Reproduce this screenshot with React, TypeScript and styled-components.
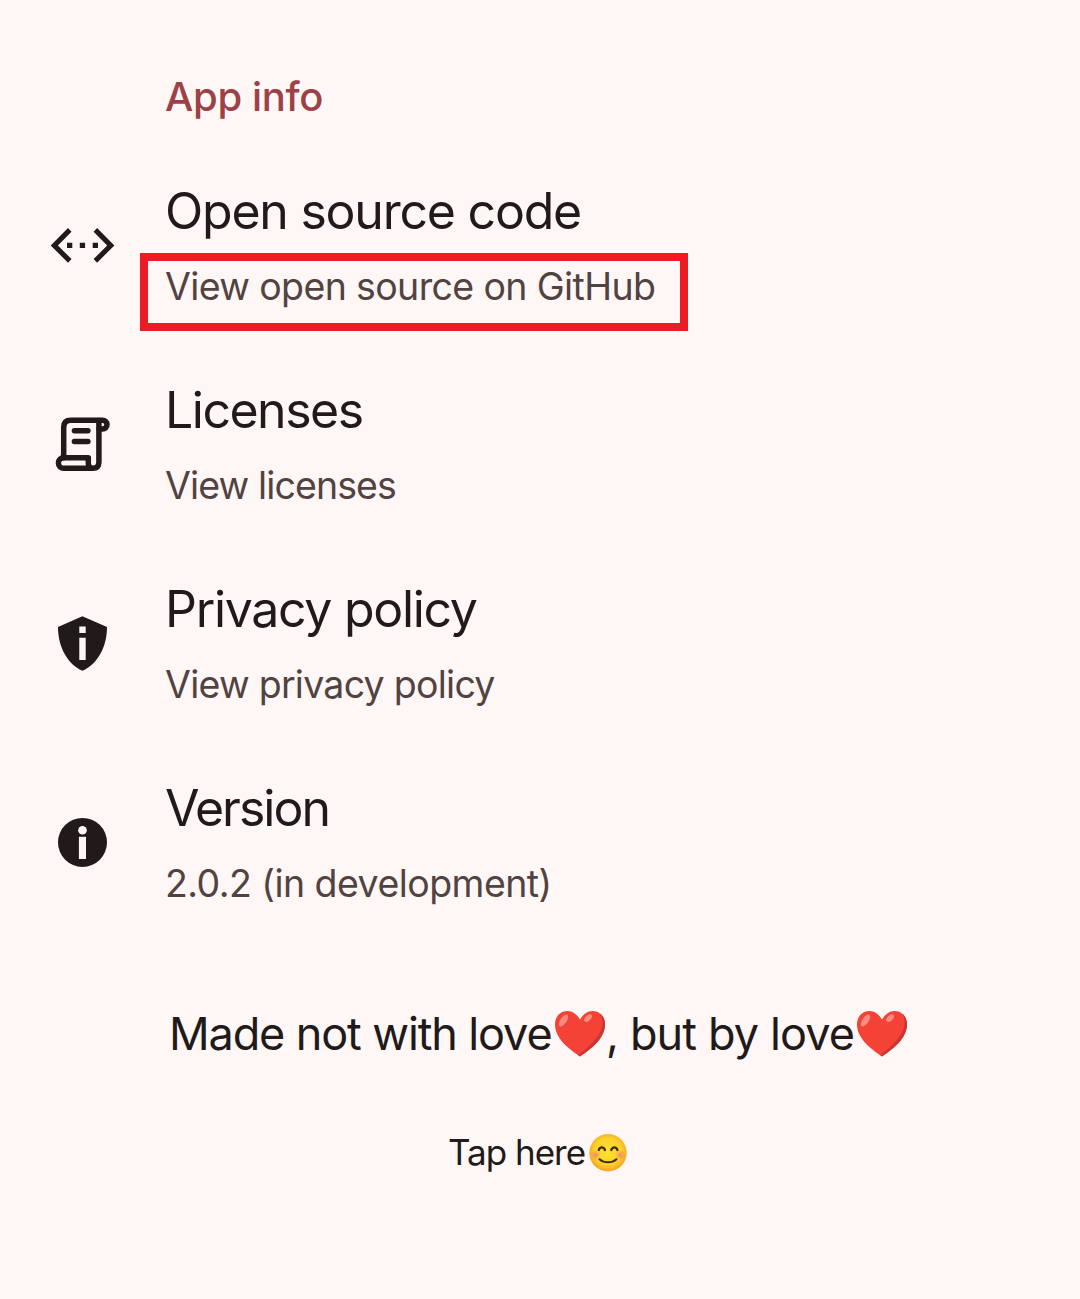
import React from "react";
import styled, { createGlobalStyle } from "styled-components";

const ink = "#201a1a";
const surface = "#fff7f5";

const GlobalStyle = createGlobalStyle`
  * { box-sizing: border-box; }
  body {
    margin: 0;
    background: ${surface};
    color: ${ink};
    font-family: Inter, Roboto, "Liberation Sans", sans-serif;
  }
`;

const Page = styled.main`
  width: 1080px;
  height: 1299px;
  padding-top: 72px;
  background: ${surface};
  overflow: hidden;
`;

const SectionTitle = styled.h2`
  margin: 0 0 0 165px;
  height: 50px;
  line-height: 50px;
  font-size: 40px;
  font-weight: 500;
  letter-spacing: -0.35px;
  color: #9c4146;
  white-space: nowrap;
`;

const List = styled.ul`
  list-style: none;
  margin: 24px 0 0;
  padding: 0;
`;

const Row = styled.li`
  display: flex;
  align-items: center;
  height: 199px;
  padding-left: 48px;
  gap: 48px;
`;

const RowIcon = styled.svg`
  flex: none;
  width: 69px;
  height: 69px;
  fill: ${ink};
`;

const RowText = styled.div`
  display: flex;
  flex-direction: column;
  align-items: flex-start;
  gap: 14px;
  padding-top: 5px;
`;

const Title = styled.div<{ $track: number }>`
  height: 64px;
  line-height: 64px;
  font-size: 50px;
  font-weight: 400;
  letter-spacing: ${(p) => p.$track}px;
  white-space: nowrap;
`;

const Subtitle = styled.div<{ $track: number }>`
  position: relative;
  height: 60px;
  line-height: 60px;
  font-size: 37.5px;
  font-weight: 400;
  letter-spacing: ${(p) => p.$track}px;
  color: #524343;
  white-space: nowrap;
`;

const Highlight = styled.span`
  position: absolute;
  left: -25px;
  top: -4px;
  width: 548px;
  height: 78px;
  border: 8px solid #ed1c24;
`;

const Motto = styled.p`
  display: flex;
  align-items: center;
  margin: 62px 0 0 169px;
  height: 60px;
  line-height: 60px;
  font-size: 45px;
  white-space: pre;
`;

const TapHint = styled.p`
  display: flex;
  align-items: center;
  margin: 64px 0 0 448px;
  height: 50px;
  line-height: 46px;
  font-size: 35px;
  white-space: pre;
`;

const Segment = styled.span<{ $width: number; $track: number; $lift?: number }>`
  width: ${(p) => p.$width}px;
  padding-bottom: ${(p) => p.$lift ?? 0}px;
  letter-spacing: ${(p) => p.$track}px;
`;

const HeartArt = styled.svg`
  flex: none;
  width: 52px;
  height: 48px;
`;

const SmileArt = styled.svg`
  flex: none;
  width: 40px;
  height: 40px;
`;

const CodeIcon = () => (
  <RowIcon viewBox="0 0 69 69">
    <path d="M2.7 34.4 20 17.1l3.5 3.6L9.9 34.4l13.6 13.7-3.5 3.6ZM66.4 34.4 49.1 17.1l-3.5 3.6 13.6 13.7-13.6 13.7 3.5 3.6Z" />
    <path d="M19 31.8h5.3v5.3H19zM31.8 31.8h5.3v5.3h-5.3zM44.7 31.8H50v5.3h-5.3z" />
  </RowIcon>
);

const ScrollIcon = () => (
  <RowIcon viewBox="0 0 69 69">
    <g fill="none" stroke={ink} strokeWidth="5.5" strokeLinecap="round" strokeLinejoin="round">
      <path d="M15.7 47.7V17.200q0-7 7-7h31.900a4.400 4.400 0 0 1 0 8.800h-3.500" />
      <path d="M50.900 10.500V52q0 6.300-6 6.300H15.700a5.300 5.300 0 0 1 0-10.600h24.600v5.500q0 5.100 4.400 5.100" />
      <path d="M26.400 20.800h13.500M26.400 31.600h13.500" />
    </g>
  </RowIcon>
);

const ShieldIcon = () => (
  <RowIcon viewBox="0 0 69 69">
    <path d="M34.4 7.3 59 18C59 38 49.5 55 34.4 61.8 19.3 55 10 38 10 18Z" />
    <path fill={surface} d="M31.3 17.6h6.4V24h-6.400zM31.300 28.700h6.400V51h-6.400z" />
  </RowIcon>
);

const InfoIcon = () => (
  <RowIcon viewBox="0 0 69 69">
    <circle cx="34.5" cy="34.4" r="24.5" />
    <circle cx="34.5" cy="22.2" r="4.3" fill={surface} />
    <path fill={surface} d="M30.9 28.8H38V51h-7.1z" />
  </RowIcon>
);

const Heart = () => (
  <HeartArt viewBox="0 0 52 48" role="img" aria-label="love">
    <defs>
      <clipPath id="heartShape">
        <path d="M26 9.6C23.3 4.6 18.7 1 13.4 1 6.3 1 1 6.7 1 14.2 1 28.5 15 39 26 46.5 37 39 51 28.5 51 14.2 51 6.7 45.7 1 38.6 1 33.3 1 28.7 4.6 26 9.6Z" />
      </clipPath>
    </defs>
    <g clipPath="url(#heartShape)">
      <path fill="#f44336" d="M0 0h52v48H0z" />
      <path fill="#c93535" d="M43.5 0C52 9 49 21 40.5 30.5 35.5 36 30 40.5 24 45.200L26 48H52V0Z" />
    </g>
    <ellipse cx="9.5" cy="10.5" rx="3.2" ry="6.8" transform="rotate(35 9.5 10.5)" fill="#ff8a80" />
    <ellipse cx="34" cy="8.2" rx="2.6" ry="4.7" transform="rotate(48 34 8.2)" fill="#ff8a80" />
  </HeartArt>
);

const Smile = () => (
  <SmileArt viewBox="0 0 40 40" role="img" aria-label="smile">
    <defs>
      <radialGradient id="face" cx="50%" cy="46%" r="54%">
        <stop offset="0" stopColor="#fde030" />
        <stop offset="0.65" stopColor="#fbd32d" />
        <stop offset="1" stopColor="#f4a223" />
      </radialGradient>
      <radialGradient id="cheek">
        <stop offset="0" stopColor="#f58b68" />
        <stop offset="1" stopColor="#f58b68" stopOpacity="0" />
      </radialGradient>
    </defs>
    <circle cx="20" cy="19.8" r="18.7" fill="url(#face)" />
    <circle cx="7.5" cy="22" r="5.2" fill="url(#cheek)" />
    <circle cx="32.500" cy="22" r="5.2" fill="url(#cheek)" />
    <g fill="none" stroke="#422b0d" strokeLinecap="round">
      <path strokeWidth="2.3" d="M10.8 17c.9-3.600 5.100-3.600 6.100 0M23.300 17c1-3.600 5.200-3.600 6.100 0" />
      <path strokeWidth="2" d="M11.500 26.200c4.700 4.100 12.300 4.100 17 0" />
    </g>
  </SmileArt>
);

const items = [
  { icon: <CodeIcon />, title: "Open source code", tt: -1.23, sub: "View open source on GitHub", st: -0.63, marked: true },
  { icon: <ScrollIcon />, title: "Licenses", tt: -1.5, sub: "View licenses", st: -0.88 },
  { icon: <ShieldIcon />, title: "Privacy policy", tt: -1.3, sub: "View privacy policy", st: -0.74 },
  { icon: <InfoIcon />, title: "Version", tt: -2, sub: "2.0.2 (in development)", st: -0.55 },
];

export default function App() {
  return (
    <Page>
      <GlobalStyle />
      <SectionTitle>App info</SectionTitle>
      <List>
        {items.map((item) => (
          <Row key={item.title}>
            {item.icon}
            <RowText>
              <Title $track={item.tt}>{item.title}</Title>
              <Subtitle $track={item.st}>
                {item.sub}
                {item.marked && <Highlight />}
              </Subtitle>
            </RowText>
          </Row>
        ))}
      </List>
      <Motto>
        <Segment $width={385} $track={-1.12}>Made not with love</Segment>
        <Heart />
        <Segment $width={250} $track={-0.87}>, but by love</Segment>
        <Heart />
      </Motto>
      <TapHint>
        <Segment $width={140} $track={-1} $lift={2}>Tap here</Segment>
        <Smile />
      </TapHint>
    </Page>
  );
}
